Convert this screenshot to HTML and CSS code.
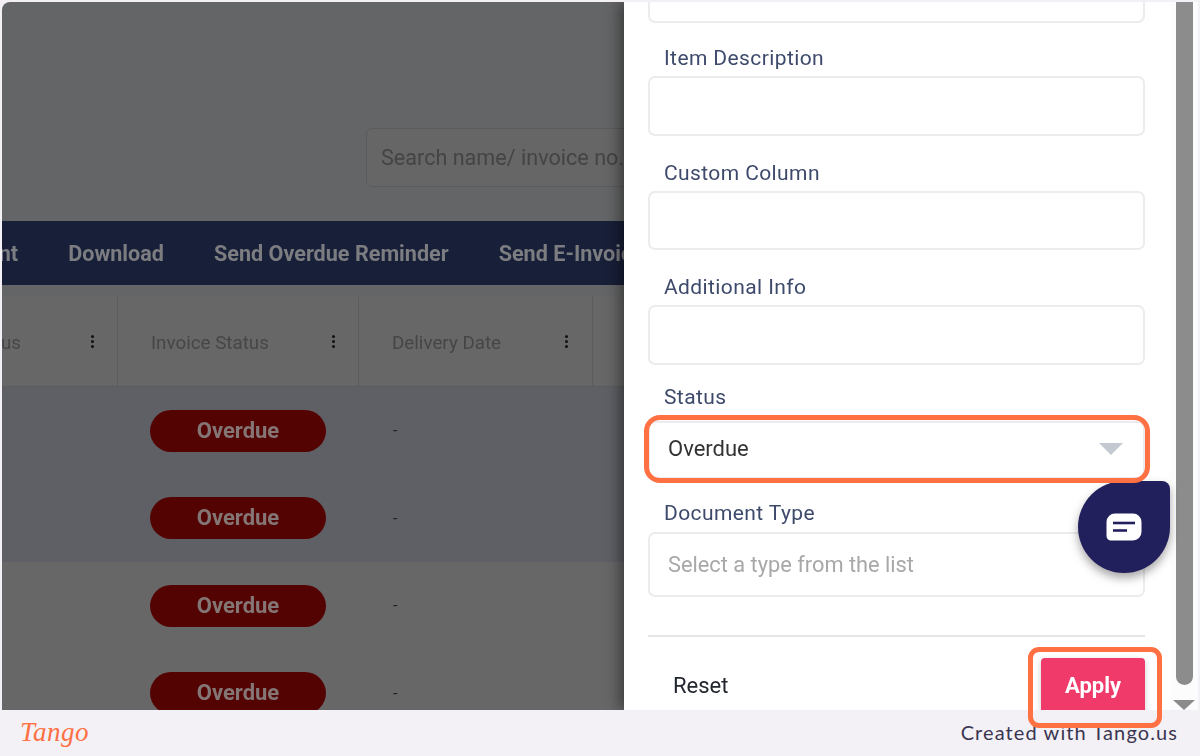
FILE: index.html
```html
<!DOCTYPE html>
<html>
<head>
    <title>Invoices - Filter Panel</title>
    <link rel="stylesheet" href="styles.css">
</head>
<body>
    <div class="shot">
        <div class="backdrop">
            <div class="search-row">
                <div class="search">Search name/ invoice no.</div>
            </div>
            <div class="toolbar">
                <span class="tool tool-first">Make Payment</span>
                <span class="tool">Download</span>
                <span class="tool">Send Overdue Reminder</span>
                <span class="tool">Send E-Invoice</span>
            </div>
            <div class="thead">
                <div class="th th-pay"><span>Payment Status</span><i class="kebab"></i></div>
                <div class="th th-inv"><span>Invoice Status</span><i class="kebab"></i></div>
                <div class="th th-del"><span>Delivery Date</span><i class="kebab"></i></div>
            </div>
            <div class="row row-blue"><span class="badge">Overdue</span><span class="dash">-</span></div>
            <div class="row row-blue"><span class="badge">Overdue</span><span class="dash">-</span></div>
            <div class="row"><span class="badge">Overdue</span><span class="dash">-</span></div>
            <div class="row"><span class="badge">Overdue</span><span class="dash">-</span></div>
        </div>
        <div class="panel">
            <div class="form">
                <div class="input input-cut"></div>
                <div class="field field-first">
                    <label>Item Description</label>
                    <div class="input"></div>
                </div>
                <div class="field">
                    <label>Custom Column</label>
                    <div class="input"></div>
                </div>
                <div class="field">
                    <label>Additional Info</label>
                    <div class="input"></div>
                </div>
                <div class="field field-status">
                    <label>Status</label>
                    <div class="input select">Overdue<i class="caret"></i></div>
                </div>
                <div class="field field-doc">
                    <label>Document Type</label>
                    <div class="input input-tall">Select a type from the list</div>
                </div>
                <div class="actions">
                    <span class="reset">Reset</span>
                    <span class="apply">Apply</span>
                </div>
            </div>
            <div class="scroll">
                <div class="thumb"></div>
                <i class="scroll-arrow"></i>
            </div>
        </div>
    </div>
    <div class="footer">
        <span class="logo">Tango</span>
        <span class="credit">Created with Tango.us</span>
    </div>

    <!-- overlays -->
    <div class="chat">
        <svg width="36" height="28" viewBox="0 0 36 28">
            <path d="M9 0.5H27A8.5 8.5 0 0 1 35.5 9V19A8.5 8.5 0 0 1 27 27.5H5A4.5 4.5 0 0 1 0.5 23V9A8.5 8.5 0 0 1 9 0.5Z" fill="#fff"/>
            <path d="M7 10H29" stroke="#211f5c" stroke-width="2.6"/>
            <path d="M7 17.5H21" stroke="#211f5c" stroke-width="2.6"/>
        </svg>
    </div>
    <div class="mark mark-status"></div>
    <div class="mark mark-apply"></div>
</body>
</html>
```

FILE: styles.css
```css
/* Page frame */
html, body {
    margin: 0;
    height: 756px;
    overflow: hidden;
}
body {
    position: relative;
    background: #f3f1f6;
    font-family: Roboto, "Liberation Sans", sans-serif;
}
.shot {
    display: flex;
    height: 708px;
    margin: 2px 2px 0 2px;
    overflow: hidden;
    border-top-left-radius: 8px;
}

/* Dimmed page behind the panel */
.backdrop {
    width: 622px;
    flex-shrink: 0;
    overflow: hidden;
    background: #646566;
    filter: blur(0.4px);
}
.search-row {
    height: 219px;
    padding: 126px 0 0 364px;
    box-sizing: border-box;
}
.search {
    width: 400px;
    height: 59px;
    line-height: 58px;
    padding-left: 14px;
    box-sizing: border-box;
    border: 1px solid #5b5b5b;
    border-radius: 6px;
    background: #666;
    color: #444;
    font-size: 21.6px;
    white-space: nowrap;
}
.toolbar {
    display: flex;
    gap: 50px;
    height: 64px;
    align-items: center;
    background: #181f38;
    color: #7c7d80;
    font-size: 21.6px;
    font-weight: 700;
    white-space: nowrap;
}
.tool-first {
    margin-left: -128.5px;
}
.thead {
    display: flex;
    height: 90px;
    margin-top: 12px;
    background: #676767;
    border-bottom: 1px solid #5c5c5c;
    box-sizing: border-box;
    color: #464646;
    font-size: 18.8px;
    white-space: nowrap;
}
.th {
    display: flex;
    align-items: center;
    justify-content: space-between;
    flex-shrink: 0;
    border-right: 1px solid #5c5c5c;
    box-sizing: border-box;
}
.th span {
    padding-top: 2px;
}
.th-pay {
    width: 116px;
    padding-right: 23px;
    overflow: hidden;
    justify-content: flex-end;
    gap: 70px;
}
.th-inv {
    width: 241px;
    padding: 0 23px 0 33px;
}
.th-del {
    width: 234px;
    padding: 0 24px 0 33px;
}
.kebab {
    width: 3px;
    height: 3px;
    border-radius: 50%;
    background: #111;
    box-shadow: 0 -5px 0 #111, 0 5px 0 #111;
    flex-shrink: 0;
}
.row {
    display: flex;
    align-items: center;
    height: 87.5px;
    padding-left: 148px;
    background: #676767;
    box-sizing: border-box;
}
.row-blue {
    background: #5f6065;
}
.badge {
    width: 176px;
    height: 42px;
    line-height: 41px;
    border-radius: 21px;
    background: #540303;
    color: #857676;
    font-size: 22px;
    font-weight: 700;
    text-align: center;
}
.dash {
    margin-left: 67px;
    color: #222;
    font-size: 16px;
}

/* Filter panel */
.panel {
    position: relative;
    display: flex;
    flex: 1;
    background: #fff;
    box-shadow: -4px 0 14px rgba(0, 0, 0, 0.45);
}
.form {
    width: 546px;
    padding: 0 25px 0 24px;
    box-sizing: border-box;
    filter: blur(0.25px);
}
.input {
    height: 59.5px;
    padding-left: 18px;
    box-sizing: border-box;
    border: 2px solid #ececee;
    border-radius: 7px;
    background: #fff;
    color: #a8a8a8;
    font-size: 21.8px;
}
.input-cut {
    height: 21px;
    border-top: 0;
    border-top-left-radius: 0;
    border-top-right-radius: 0;
}
.field {
    margin-top: 25px;
}
.field label {
    display: block;
    height: 24px;
    line-height: 25px;
    margin-bottom: 6px;
    padding-left: 16px;
    color: #3e4a6b;
    font-size: 21px;
    letter-spacing: 0.4px;
}
.field-first {
    margin-top: 23px;
}
.field-status {
    margin-top: 20px;
}
.field-status label {
    margin-bottom: 12px;
}
.field-doc {
    margin-top: 22.5px;
}
.field-doc label {
    margin-bottom: 7px;
}
.select {
    position: relative;
    height: 58px;
    line-height: 51px;
    color: #333;
    font-size: 22px;
}
.caret {
    position: absolute;
    right: 20px;
    top: 20px;
    width: 0;
    height: 0;
    border-left: 12.5px solid transparent;
    border-right: 12.5px solid transparent;
    border-top: 12px solid #c4c9d1;
}
.input-tall {
    height: 64.5px;
    line-height: 62px;
}
.actions {
    display: flex;
    justify-content: space-between;
    align-items: center;
    height: 56px;
    margin-top: 38.5px;
    padding: 22px 0 0 25px;
    border-top: 2px solid #e6e6e8;
}
.reset {
    margin-bottom: 4px;
    color: #22262e;
    font-size: 22px;
}
.apply {
    width: 104px;
    height: 58px;
    line-height: 56px;
    border-radius: 4px;
    background: #ef3a6a;
    color: #fff;
    font-size: 22px;
    font-weight: 700;
    text-align: center;
    box-shadow: 0 2px 6px rgba(0, 0, 0, 0.2);
}
.scroll {
    display: flex;
    flex-direction: column;
    align-items: center;
    flex: 1;
    background: #fcfcfc;
}
.thumb {
    width: 17px;
    height: 683px;
    flex-shrink: 0;
    border-radius: 0 0 9px 9px;
    background: #8c8c8c;
}
.scroll-arrow {
    width: 0;
    height: 0;
    margin-top: 15px;
    border-left: 11px solid transparent;
    border-right: 11px solid transparent;
    border-top: 10px solid #8c8c8c;
}

/* Bottom strip */
.footer {
    display: flex;
    justify-content: space-between;
    align-items: center;
    height: 46px;
    padding: 0 22px 2px 20px;
    box-sizing: border-box;
    border-radius: 0 0 8px 8px;
    background: #f3f1f6;
}
.logo {
    color: #ff7043;
    font-family: "Liberation Serif", serif;
    font-size: 27px;
    font-style: italic;
    letter-spacing: 0.5px;
}
.credit {
    color: #3a3550;
    font-family: Lato, sans-serif;
    font-size: 20px;
    letter-spacing: 1.1px;
}

/* Things lying over the page */
.chat {
    position: absolute;
    left: 1078px;
    top: 481px;
    display: flex;
    align-items: center;
    justify-content: center;
    width: 92px;
    height: 92px;
    border-radius: 46px 8px 46px 46px;
    background: #211f5c;
    box-shadow: 0 5px 10px rgba(0, 0, 0, 0.35);
}
.mark {
    position: absolute;
    box-sizing: border-box;
    border: 5px solid #ff7043;
}
.mark-status {
    left: 644px;
    top: 415px;
    width: 506px;
    height: 68px;
    border-radius: 16px;
}
.mark-apply {
    left: 1028px;
    top: 647px;
    width: 134px;
    height: 81px;
    border-radius: 11px;
}
```
